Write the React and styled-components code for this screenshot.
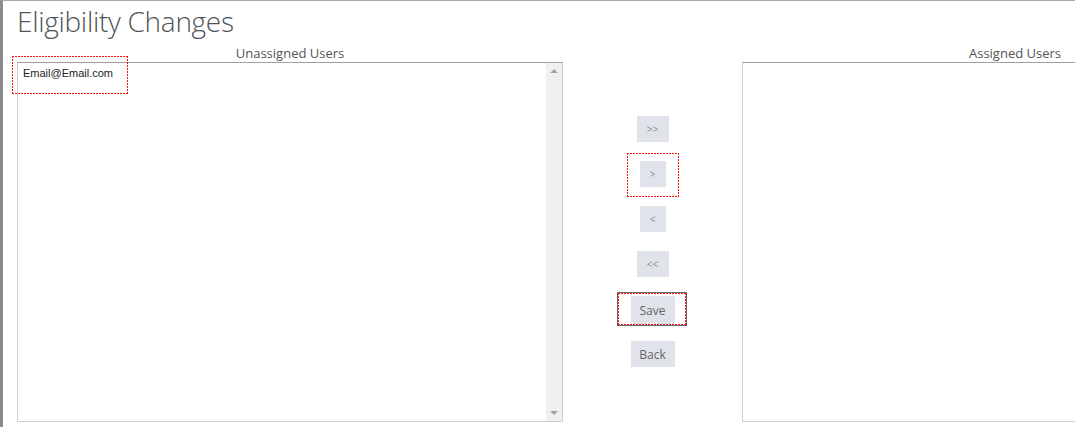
import React from 'react';
import styled, { createGlobalStyle } from 'styled-components';

const GlobalStyle = createGlobalStyle`
  html, body {
    margin: 0;
    padding: 0;
    background: #fff;
    overflow: hidden;
  }
  body {
    font-family: "Open Sans", "Liberation Sans", sans-serif;
  }
`;

const Page = styled.div`
  width: 1400px;
  height: 427px;
  border-top: 1px solid #a8a8a8;
  border-left: 3px solid #8c8c8c;
  padding: 0 0 0 14px;
  box-sizing: border-box;
`;

const Title = styled.h1`
  margin: 0;
  padding-top: 3px;
  font-size: 28px;
  font-weight: 300;
  line-height: 34px;
  color: #4f5459;
  letter-spacing: -0.3px;
`;

const Columns = styled.div`
  display: grid;
  grid-template-columns: 546px 179px 546px;
  margin-top: 6px;
`;

const ListColumn = styled.div`
  display: flex;
  flex-direction: column;
`;

const ListLabel = styled.div`
  text-align: center;
  font-size: 13px;
  line-height: 18px;
  color: #555;
`;

const ListBox = styled.div`
  position: relative;
  height: 360px;
  border: 1px solid #cfcfcf;
  border-top-color: #a0a0a0;
  box-sizing: border-box;
  display: flex;
`;

const Options = styled.div`
  flex: 1;
  display: flex;
  flex-direction: column;
  align-items: flex-start;
  padding: 3px 5px;
`;

const Option = styled.div`
  position: relative;
  font-family: "Liberation Sans", Arial, sans-serif;
  font-size: 11px;
  line-height: 15px;
  color: #222;
`;

const Scrollbar = styled.div`
  width: 16px;
  background: #f0f0f0;
  display: flex;
  flex-direction: column;
  justify-content: space-between;
  align-items: center;
  padding: 6px 0;
`;

const Arrow = styled.span`
  width: 0;
  height: 0;
  border-left: 4px solid transparent;
  border-right: 4px solid transparent;
  ${p => p.$down
    ? 'border-top: 4px solid #a3a3a3;'
    : 'border-bottom: 4px solid #a3a3a3;'}
`;

const Controls = styled.div`
  display: flex;
  flex-direction: column;
  align-items: center;
  padding-top: 72px;
`;

const Slot = styled.div`
  height: 45px;
  display: flex;
  align-items: flex-start;
  justify-content: center;
`;

const Button = styled.button`
  position: relative;
  border: none;
  background: #e0e4ea;
  color: ${p => (p.$text ? '#666' : '#8a8a8a')};
  font-family: "Open Sans", "Liberation Sans", sans-serif;
  font-size: ${p => (p.$text ? '12px' : '10px')};
  width: ${p => p.$w}px;
  height: ${p => p.$h || 26}px;
  padding: 0;
  cursor: pointer;
`;

// dotted red focus marker drawn with gradients so the dots stay red
const dots = '#ff1010 0 2px, transparent 2px 3px';
const Mark = styled.span`
  position: absolute;
  box-sizing: border-box;
  top: ${p => -p.$t}px;
  bottom: ${p => -p.$b}px;
  left: ${p => -p.$l}px;
  right: ${p => -p.$r}px;
  background:
    linear-gradient(90deg, ${dots}) top left / 3px 1px repeat-x,
    linear-gradient(90deg, ${dots}) bottom left / 3px 1px repeat-x,
    linear-gradient(180deg, ${dots}) top left / 1px 3px repeat-y,
    linear-gradient(180deg, ${dots}) top right / 1px 3px repeat-y;
  background-origin: border-box;
  ${p => p.$dark && 'box-shadow: 0 0 0 1px #6a6a6a;'}
  pointer-events: none;
`;

const App = () => {
  return (
    <>
      <GlobalStyle />
      <Page>
        <Title>Eligibility Changes</Title>
        <Columns>
          <ListColumn>
            <ListLabel>Unassigned Users</ListLabel>
            <ListBox>
              <Options>
                <Option>
                  Email@Email.com
                  <Mark $t={10} $b={13} $l={11} $r={15} />
                </Option>
              </Options>
              <Scrollbar>
                <Arrow />
                <Arrow $down />
              </Scrollbar>
            </ListBox>
          </ListColumn>

          <Controls>
            <Slot><Button $w={32}>&gt;&gt;</Button></Slot>
            <Slot>
              <Button $w={26}>
                &gt;
                <Mark $t={8} $b={10} $l={13} $r={13} />
              </Button>
            </Slot>
            <Slot><Button $w={26}>&lt;</Button></Slot>
            <Slot><Button $w={32}>&lt;&lt;</Button></Slot>
            <Slot>
              <Button $w={44} $h={28} $text>
                Save
                <Mark $t={3} $b={1} $l={13} $r={11} $dark />
              </Button>
            </Slot>
            <Slot><Button $w={44} $text>Back</Button></Slot>
          </Controls>

          <ListColumn>
            <ListLabel>Assigned Users</ListLabel>
            <ListBox />
          </ListColumn>
        </Columns>
      </Page>
    </>
  );
};

export default App;
